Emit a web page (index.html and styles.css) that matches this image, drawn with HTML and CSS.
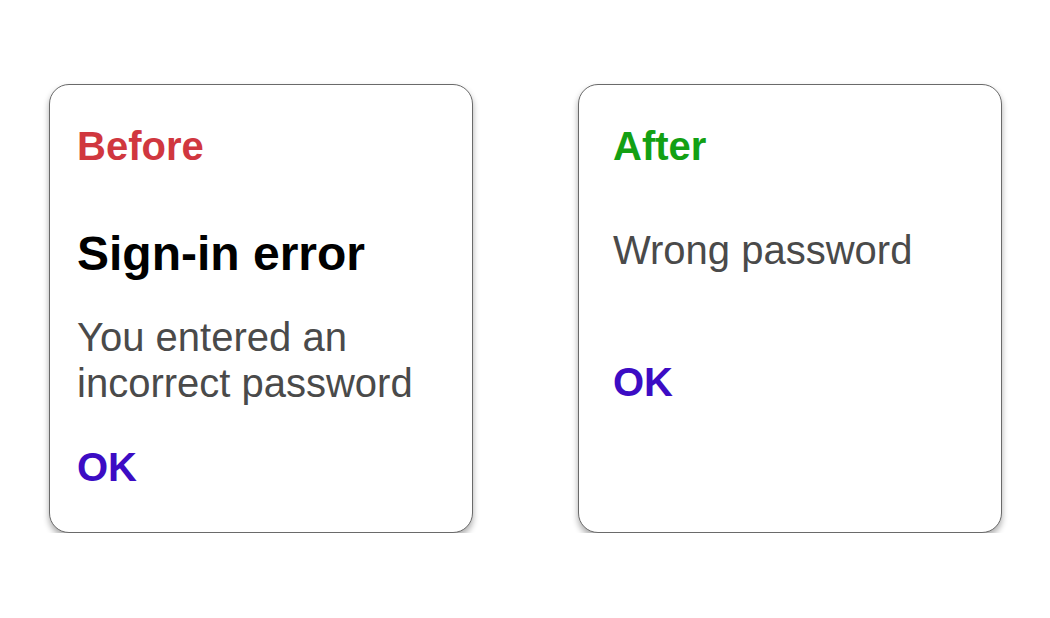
FILE: index.html
```html
<!DOCTYPE html>
<html>
<head>
<meta charset="utf-8">
<link rel="stylesheet" href="styles.css">
</head>
<body>
<div class="stage">
  <div class="card card-before">
    <div class="label label-before">Before</div>
    <div class="title">Sign-in error</div>
    <div class="body body-before">You entered an<br>incorrect password</div>
    <div class="ok ok-before">OK</div>
  </div>
  <div class="card card-after">
    <div class="label label-after">After</div>
    <div class="body body-after">Wrong password</div>
    <div class="ok ok-after">OK</div>
  </div>
</div>
</body>
</html>
```
FILE: styles.css
```css
html, body {
  margin: 0;
  padding: 0;
  background: #ffffff;
}
body {
  font-family: "Liberation Sans", Arial, sans-serif;
}
.stage {
  display: flex;
  gap: 105px;
  padding: 84px 0 0 49px;
}
.card {
  box-sizing: border-box;
  width: 424px;
  height: 449px;
  border: 1px solid #6a6a6a;
  border-radius: 20px;
  background: #fff;
  box-shadow: 0 4px 6px rgba(0, 0, 0, 0.33);
  padding-top: 38px;
}
.card-before {
  padding-left: 27px;
}
.card-after {
  padding-left: 34px;
}
.label {
  font-size: 40px;
  line-height: 46px;
  font-weight: bold;
}
.label-before { color: #d0373f; }
.label-after { color: #13a013; }
.title {
  font-size: 48px;
  line-height: 56px;
  font-weight: bold;
  color: #000;
  margin-top: 57px;
}
.body {
  font-size: 40px;
  line-height: 46px;
  color: #4a4a4a;
}
.body-before { margin-top: 32px; }
.body-after { margin-top: 58px; }
.ok {
  font-size: 40px;
  line-height: 46px;
  font-weight: bold;
  color: #3c0cc4;
}
.ok-before { margin-top: 38px; }
.ok-after { margin-top: 86px; }
```
